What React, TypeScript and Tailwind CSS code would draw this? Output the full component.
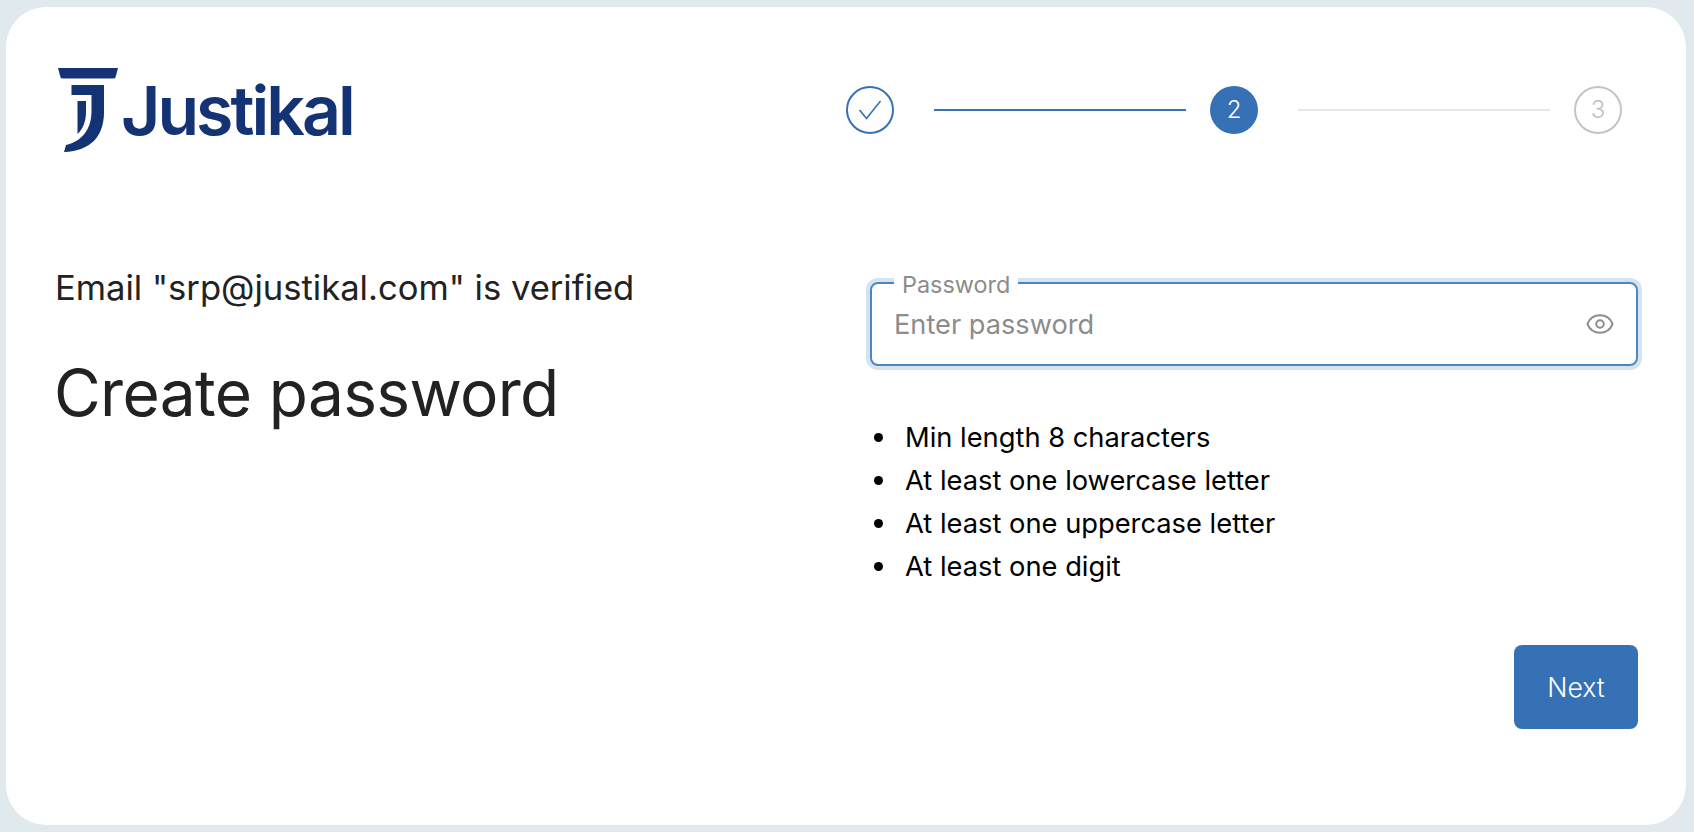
import React from "react";
import { Eye } from "lucide-react";

const font = { fontFamily: "Inter, 'Liberation Sans', sans-serif" };

const rules = [
  "Min length 8 characters",
  "At least one lowercase letter",
  "At least one uppercase letter",
  "At least one digit",
];

function Logo() {
  return (
    <div className="flex items-start">
      <svg width="60" height="85" viewBox="0 0 60 85" className="shrink-0">
        <path fill="#143375" d="M0 0H60L57.5 9.5Q57 10.5 55 10.5H5Q3 10.5 2.5 9.5Z" />
        <path fill="#143375" d="M13.5 17H46V44C46 68 33 83 6 84L8 77C24 73 33 62 33.5 44V27H13.5Z" />
        <path fill="#143375" d="M19.5 33H28V44C28 53 25 61 19.5 66Z" />
      </svg>
      <span className="ml-[3px] mt-[1px] text-[68px] font-semibold leading-[82px] tracking-[-3px] text-[#143375]">Justikal</span>
    </div>
  );
}

function Stepper() {
  return (
    <div className="flex items-center">
      <div className="flex h-12 w-12 items-center justify-center rounded-full border-2 border-[#3571b4] text-[#3571b4]">
        <svg width="24" height="20" viewBox="0 0 24 20" fill="none" stroke="currentColor" strokeWidth="1.6">
          <path d="M1.5 10L8.5 18.5L22.5 1" />
        </svg>
      </div>
      <div className="ml-10 h-0.5 w-[252px] bg-[#3571b4]" />
      <div className="ml-6 flex h-12 w-12 items-center justify-center rounded-full bg-[#3571b4] text-[24px] font-light text-white">2</div>
      <div className="ml-10 h-0.5 w-[252px] bg-[#e6e6e6]" />
      <div className="ml-6 flex h-12 w-12 items-center justify-center rounded-full border-2 border-[#c4c4c4] text-[24px] font-light text-[#c0c0c0]">3</div>
    </div>
  );
}

export default function App() {
  return (
    <div style={font} className="h-[832px] w-[1694px] bg-[#dfe9ee] pb-[7px] pl-[6px] pr-2 pt-[7px]">
      <div className="h-full w-full rounded-[40px] bg-white pl-[49px] pr-[48px] pt-[61px]">
        <div className="flex items-start justify-between">
          <div className="ml-[3px]"><Logo /></div>
          <div className="mt-[18px] mr-[16px]"><Stepper /></div>
        </div>
        <div className="mt-[128px] flex">
          <div className="w-[815px]">
            <p className="-mt-[18px] text-[34.6px] leading-[48px] text-[#222222]">Email "srp@justikal.com" is verified</p>
            <h1 className="-ml-px mt-[42px] text-[64px] font-normal leading-[80px] tracking-[-0.65px] text-[#222222]">Create password</h1>
          </div>
          <div className="flex-1 pt-px">
            <div className="relative flex h-[84px] items-center justify-between rounded-lg border-2 border-[#4a86bf] pl-[22px] pr-[21px] shadow-[0_0_0_4px_#d5e3f0]">
              <span className="absolute left-[22px] top-[-12px] bg-white px-2 text-[23.4px] leading-[26px] text-[#8c8c8c]">Password</span>
              <span className="pt-0.5 text-[27.2px] text-[#8c8c8c]">Enter password</span>
              <Eye size={30} strokeWidth={1.6} className="text-[#8c8c8c]" />
            </div>
            <ul className="mt-[50px] text-[27.3px] leading-[43px] text-black">
              {rules.map((r) => (
                <li key={r} className="flex items-center">
                  <span className="ml-[4px] mr-[22px] h-[9px] w-[9px] shrink-0 rounded-full bg-black" />
                  {r}
                </li>
              ))}
            </ul>
            <div className="mt-[57px] flex justify-end">
              <button className="h-[84px] w-[124px] rounded-lg bg-[#3571b4] pt-0.5 text-[26.6px] font-light text-white">Next</button>
            </div>
          </div>
        </div>
      </div>
    </div>
  );
}
